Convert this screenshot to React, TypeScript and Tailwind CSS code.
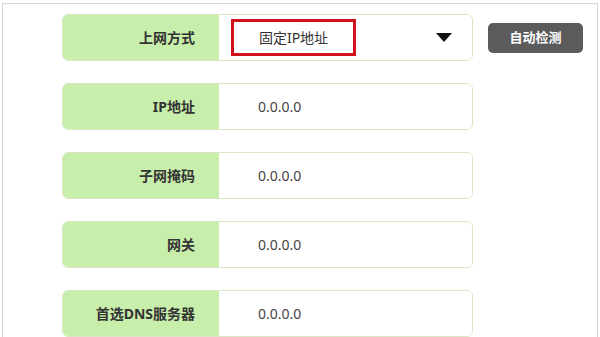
import React from 'react';

const ROWS = [
  { label: 'IP地址', value: '0.0.0.0' },
  { label: '子网掩码', value: '0.0.0.0' },
  { label: '网关', value: '0.0.0.0' },
  { label: '首选DNS服务器', value: '0.0.0.0' },
];

const font = { fontFamily: '"Noto Sans", "Noto Sans CJK SC", sans-serif' };

const Label: React.FC<{ text: string }> = ({ text }) => (
  <div className="w-[156px] h-full shrink-0 bg-[#c8eeab] flex items-center justify-end pr-[24px] text-[14px] font-bold text-[#333]">
    {text}
  </div>
);

const App: React.FC = () => {
  return (
    <div className="w-[600px] h-[337px] bg-white overflow-hidden" style={font}>
      <div className="mt-[3px] mx-[2px] h-[334px] border border-b-0 border-[#d6d6d6] pl-[59px] pt-[10px]">
        <div className="flex flex-col gap-[22px]">
          <div className="flex items-center gap-[15px]">
            <div className="w-[411px] h-[47px] flex rounded-[6px] border border-[#dbe6c4] overflow-hidden">
              <Label text="上网方式" />
              <div className="flex-1 flex items-center pl-[12px] pr-[20px] bg-white">
                <div className="w-[125px] h-[37px] border-[3px] border-[#d0121b] flex items-center justify-center text-[14px] text-[#333]">
                  固定IP地址
                </div>
                <div className="flex-1" />
                <svg width="16" height="9" viewBox="0 0 16 9">
                  <path d="M0 0 L16 0 L8 9 Z" fill="#111" />
                </svg>
              </div>
            </div>
            <button className="w-[95px] h-[30px] rounded-[5px] bg-[#5b5b5b] text-white text-[13px] font-bold">
              自动检测
            </button>
          </div>
          {ROWS.map((row) => (
            <div key={row.label} className="w-[411px] h-[47px] flex rounded-[6px] border border-[#dbe6c4] overflow-hidden">
              <Label text={row.label} />
              <div className="flex-1 flex items-center pl-[39px] bg-white text-[14px] text-[#444]">
                {row.value}
              </div>
            </div>
          ))}
        </div>
      </div>
    </div>
  );
};

export default App;
